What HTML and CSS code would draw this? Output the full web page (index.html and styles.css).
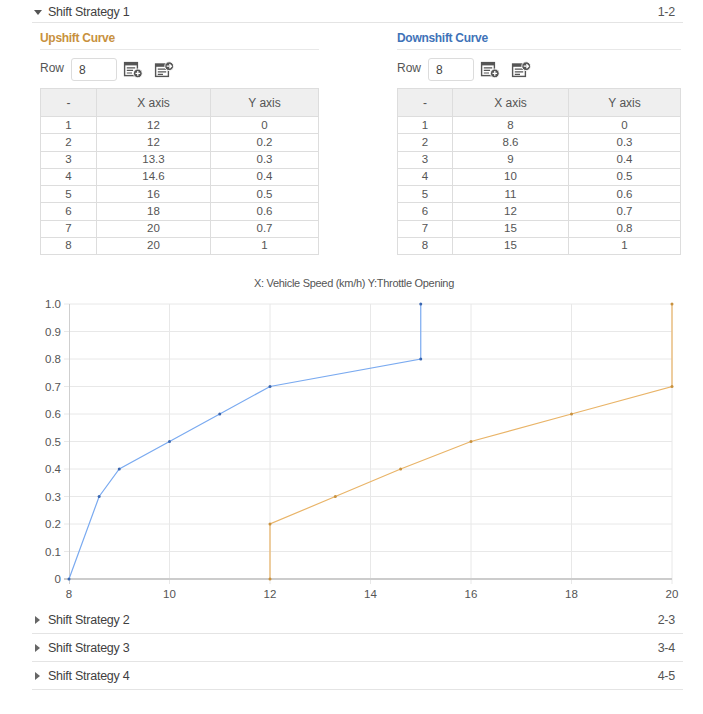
FILE: index.html
```html
<!DOCTYPE html>
<html lang="en">
<head>
<meta charset="utf-8">
<title>Shift Strategy</title>
<link rel="stylesheet" href="styles.css">
</head>
<body>
<div class="panel">
  <div class="acc-head open">
    <span class="caret"></span>
    <span class="acc-title">Shift Strategy 1</span>
    <span class="acc-range">1-2</span>
  </div>
  <div class="acc-body">
    <div class="curves">
      <section class="curve">
        <h3 class="curve-title up">Upshift Curve</h3>
        <div class="toolbar">
          <span class="row-label">Row</span>
          <input class="row-input" type="text" value="8">
          <svg class="icon" viewBox="0 0 20 17" width="20" height="17">
            <rect x="1.6" y="1.6" width="12.8" height="13" fill="none" stroke="#555" stroke-width="1.4"/>
            <rect x="1.6" y="1.6" width="12.8" height="2.8" fill="#555"/>
            <path d="M3.8 6.8H12.2M3.8 9.4H10M3.8 12H9" stroke="#555" stroke-width="1.2"/>
            <circle cx="14.8" cy="12.4" r="4.4" fill="#555" stroke="#fff" stroke-width="0.9"/>
            <path d="M12.5 12.4H17.1M14.8 10.1V14.7" stroke="#fff" stroke-width="1.3"/>
          </svg>
          <svg class="icon" viewBox="0 0 20 17" width="20" height="17">
            <rect x="1.6" y="3" width="12.8" height="12.4" fill="none" stroke="#555" stroke-width="1.4"/>
            <rect x="1.6" y="3" width="12.8" height="2.8" fill="#555"/>
            <path d="M3.8 8.2H12.2M3.8 10.8H12.2M3.8 13.3H9" stroke="#555" stroke-width="1.2"/>
            <circle cx="15.2" cy="5.2" r="4.4" fill="#555" stroke="#fff" stroke-width="0.9"/>
            <path d="M12.7 5.2H17.3M15.4 3.2L17.4 5.2L15.4 7.2" fill="none" stroke="#fff" stroke-width="1.3"/>
          </svg>
        </div>
        <table class="grid-table">
          <thead><tr><th class="c-idx">-</th><th class="c-x">X axis</th><th>Y axis</th></tr></thead>
          <tbody>
            <tr><td>1</td><td>12</td><td>0</td></tr>
            <tr><td>2</td><td>12</td><td>0.2</td></tr>
            <tr><td>3</td><td>13.3</td><td>0.3</td></tr>
            <tr><td>4</td><td>14.6</td><td>0.4</td></tr>
            <tr><td>5</td><td>16</td><td>0.5</td></tr>
            <tr><td>6</td><td>18</td><td>0.6</td></tr>
            <tr><td>7</td><td>20</td><td>0.7</td></tr>
            <tr><td>8</td><td>20</td><td>1</td></tr>
          </tbody>
        </table>
      </section>
      <section class="curve">
        <h3 class="curve-title down">Downshift Curve</h3>
        <div class="toolbar">
          <span class="row-label">Row</span>
          <input class="row-input" type="text" value="8">
          <svg class="icon" viewBox="0 0 20 17" width="20" height="17">
            <rect x="1.6" y="1.6" width="12.8" height="13" fill="none" stroke="#555" stroke-width="1.4"/>
            <rect x="1.6" y="1.6" width="12.8" height="2.8" fill="#555"/>
            <path d="M3.8 6.8H12.2M3.8 9.4H10M3.8 12H9" stroke="#555" stroke-width="1.2"/>
            <circle cx="14.8" cy="12.4" r="4.4" fill="#555" stroke="#fff" stroke-width="0.9"/>
            <path d="M12.5 12.4H17.1M14.8 10.1V14.7" stroke="#fff" stroke-width="1.3"/>
          </svg>
          <svg class="icon" viewBox="0 0 20 17" width="20" height="17">
            <rect x="1.6" y="3" width="12.8" height="12.4" fill="none" stroke="#555" stroke-width="1.4"/>
            <rect x="1.6" y="3" width="12.8" height="2.8" fill="#555"/>
            <path d="M3.8 8.2H12.2M3.8 10.8H12.2M3.8 13.3H9" stroke="#555" stroke-width="1.2"/>
            <circle cx="15.2" cy="5.2" r="4.4" fill="#555" stroke="#fff" stroke-width="0.9"/>
            <path d="M12.7 5.2H17.3M15.4 3.2L17.4 5.2L15.4 7.2" fill="none" stroke="#fff" stroke-width="1.3"/>
          </svg>
        </div>
        <table class="grid-table wide">
          <thead><tr><th class="c-idx">-</th><th class="c-x">X axis</th><th>Y axis</th></tr></thead>
          <tbody>
            <tr><td>1</td><td>8</td><td>0</td></tr>
            <tr><td>2</td><td>8.6</td><td>0.3</td></tr>
            <tr><td>3</td><td>9</td><td>0.4</td></tr>
            <tr><td>4</td><td>10</td><td>0.5</td></tr>
            <tr><td>5</td><td>11</td><td>0.6</td></tr>
            <tr><td>6</td><td>12</td><td>0.7</td></tr>
            <tr><td>7</td><td>15</td><td>0.8</td></tr>
            <tr><td>8</td><td>15</td><td>1</td></tr>
          </tbody>
        </table>
      </section>
    </div>
    <div class="chart">
      <svg class="chart-svg" width="651" height="343" viewBox="32 262 651 343">
        <text class="chart-title" x="354" y="286">X: Vehicle Speed (km/h) Y:Throttle Opening</text>
        <g class="gridlines">
          <path d="M64 303H672M64 330.5H672M64 358H672M64 385.5H672M64 413H672M64 440.5H672M64 468H672M64 495.5H672M64 523H672M64 550.5H672"/>
          <path d="M169.5 303V583M270 303V583M370.5 303V583M471 303V583M571.5 303V583M672 303V583"/>
        </g>
        <path class="axis" d="M69.5 303V583"/>
        <path class="axis bottom" d="M64 578H672"/>
        <g class="ylabels">
          <text x="61" y="307">1.0</text>
          <text x="61" y="334.5">0.9</text>
          <text x="61" y="362">0.8</text>
          <text x="61" y="389.5">0.7</text>
          <text x="61" y="417">0.6</text>
          <text x="61" y="444.5">0.5</text>
          <text x="61" y="472">0.4</text>
          <text x="61" y="499.5">0.3</text>
          <text x="61" y="527">0.2</text>
          <text x="61" y="554.5">0.1</text>
          <text x="61" y="582">0</text>
        </g>
        <g class="xlabels">
          <text x="69" y="597">8</text>
          <text x="169.5" y="597">10</text>
          <text x="270" y="597">12</text>
          <text x="370.5" y="597">14</text>
          <text x="471" y="597">16</text>
          <text x="571.5" y="597">18</text>
          <text x="672" y="597">20</text>
        </g>
        <polyline class="line-down" points="69,578 99.15,495.5 119.25,468 169.5,440.5 219.75,413 270,385.5 420.75,358 420.75,303"/>
        <polyline class="line-up" points="270,578 270,523 335.3,495.5 400.65,468 471,440.5 571.5,413 672,385.5 672,303"/>
        <g class="pts-down">
          <circle cx="69" cy="578" r="1.5"/><circle cx="99.15" cy="495.5" r="1.5"/><circle cx="119.25" cy="468" r="1.5"/><circle cx="169.5" cy="440.5" r="1.5"/><circle cx="219.75" cy="413" r="1.5"/><circle cx="270" cy="385.5" r="1.5"/><circle cx="420.75" cy="358" r="1.5"/><circle cx="420.75" cy="303" r="1.5"/>
        </g>
        <g class="pts-up">
          <circle cx="270" cy="578" r="1.5"/><circle cx="270" cy="523" r="1.5"/><circle cx="335.3" cy="495.5" r="1.5"/><circle cx="400.65" cy="468" r="1.5"/><circle cx="471" cy="440.5" r="1.5"/><circle cx="571.5" cy="413" r="1.5"/><circle cx="672" cy="385.5" r="1.5"/><circle cx="672" cy="303" r="1.5"/>
        </g>
      </svg>
    </div>
  </div>
  <div class="acc-head closed">
    <span class="caret"></span>
    <span class="acc-title">Shift Strategy 2</span>
    <span class="acc-range">2-3</span>
  </div>
  <div class="acc-head closed">
    <span class="caret"></span>
    <span class="acc-title">Shift Strategy 3</span>
    <span class="acc-range">3-4</span>
  </div>
  <div class="acc-head closed">
    <span class="caret"></span>
    <span class="acc-title">Shift Strategy 4</span>
    <span class="acc-range">4-5</span>
  </div>
</div>
</body>
</html>
```

FILE: styles.css
```css
* { box-sizing: border-box; }
html, body { margin: 0; padding: 0; background: #fff; }
body {
  font-family: "Liberation Sans", Arial, sans-serif;
  color: #555;
  font-size: 12px;
}
.panel {
  margin-left: 32px;
  width: 651px;
}
.acc-head {
  display: flex;
  align-items: center;
  height: 28px;
  border-bottom: 1px solid #e4e4e4;
  padding: 0 8px 0 2px;
  color: #3f3f3f;
  font-size: 12.5px;
  letter-spacing: -0.25px;
}
.acc-head.open {
  height: 23px;
  padding-top: 2px;
}
.acc-title { flex: 1; margin-left: 6px; }
.acc-range { color: #555; }
.caret {
  width: 0;
  height: 0;
  display: inline-block;
}
.open .caret {
  margin-left: 0;
  border-left: 4px solid transparent;
  border-right: 4px solid transparent;
  border-top: 5px solid #555;
}
.closed .caret {
  margin-left: 1px;
  margin-right: 2px;
  border-top: 4.5px solid transparent;
  border-bottom: 4.5px solid transparent;
  border-left: 5px solid #666;
}
.acc-body {
  padding-left: 8px;
}
.curves {
  display: grid;
  grid-template-columns: 279px 284px;
  column-gap: 78px;
}
.curve-title {
  margin: 5px 0 0;
  height: 22px;
  line-height: 21px;
  font-size: 12px;
  font-weight: bold;
  border-bottom: 1px solid #e8e8e8;
  letter-spacing: -0.3px;
}
.curve-title.up { color: #c8913e; }
.curve-title.down { color: #3f73b8; }
.toolbar {
  display: flex;
  align-items: center;
  margin-top: 8px;
  height: 23px;
}
.row-label {
  color: #555;
  font-size: 12px;
  margin-right: 7px;
  position: relative;
  top: -2px;
}
.row-input {
  width: 46px;
  height: 23px;
  border: 1px solid #dcdcdc;
  border-radius: 3px;
  padding: 0 7px;
  font-family: "Liberation Sans", Arial, sans-serif;
  font-size: 12px;
  color: #444;
  margin-right: 6px;
}
.icon { margin-right: 11px; }
.grid-table {
  margin-top: 7px;
  width: 279px;
  border-collapse: collapse;
  table-layout: fixed;
  font-size: 11.5px;
  color: #555;
}
.grid-table.wide { width: 284px; }
.grid-table th, .grid-table td {
  border: 1px solid #dddddd;
  text-align: center;
  padding: 0;
  font-weight: normal;
}
.grid-table th {
  background: #efefef;
  height: 28px;
  color: #555;
  font-size: 12px;
}
.grid-table td { height: 17.25px; line-height: 15px; }
.c-idx { width: 56px; }
.c-x { width: 114px; }
.wide .c-idx { width: 55px; }
.wide .c-x { width: 116px; }
.chart { margin-top: 8px; margin-left: -8px; height: 343px; }
.chart-svg { display: block; font-family: "Liberation Sans", Arial, sans-serif; }
.chart-title { font-size: 11px; letter-spacing: -0.3px; fill: #555; text-anchor: middle; }
.gridlines path { stroke: #e8e8e8; stroke-width: 1; fill: none; }
.axis { stroke: #cfcfcf; stroke-width: 1; fill: none; }
.axis.bottom { stroke: #cccccc; stroke-width: 2; }
.ylabels text { font-size: 11.5px; fill: #555; text-anchor: end; }
.xlabels text { font-size: 11.5px; fill: #555; text-anchor: middle; }
.line-down { fill: none; stroke: #7aaaf0; stroke-width: 1.2; }
.line-up { fill: none; stroke: #e9b468; stroke-width: 1.2; }
.pts-down circle { fill: #3a66b0; }
.pts-up circle { fill: #c8913e; }
```
